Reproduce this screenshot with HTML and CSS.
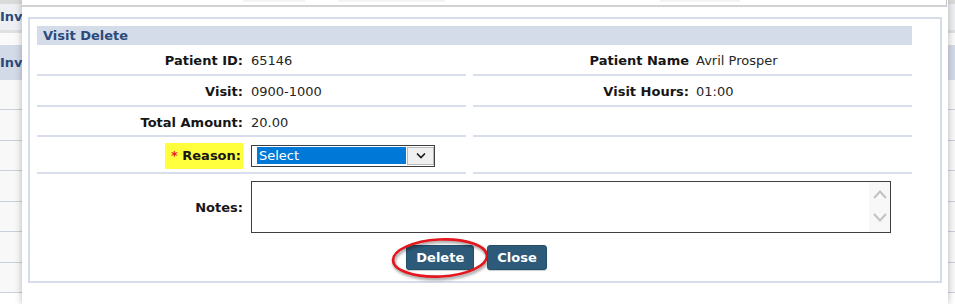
FILE: index.html
```html
<!DOCTYPE html>
<html>
<head>
<meta charset="utf-8">
<title>Visit Delete</title>
<link rel="stylesheet" href="styles.css">
</head>
<body>
<div class="page">
  <div class="bg">
    <div class="bg-top"></div>
    <div class="bg-title">Invoices</div>
    <div class="bg-sep"></div>
    <div class="bg-bar">Invoice List</div>
    <div class="bg-row first"></div>
    <div class="bg-row"></div>
    <div class="bg-row"></div>
    <div class="bg-row"></div>
    <div class="bg-row"></div>
    <div class="bg-row"></div>
    <div class="bg-row"></div>
  </div>

  <div class="dialog">
    <div class="dlg-top">
      <span class="ghost g1"></span>
      <span class="ghost g2"></span>
      <span class="ghost g3"></span>
    </div>
    <div class="panel">
      <div class="panel-head">Visit Delete</div>
      <div class="form-grid">
        <div class="cell lbl">Patient ID:</div>
        <div class="cell val">65146</div>
        <div class="cell lbl lbl-r">Patient Name</div>
        <div class="cell val">Avril Prosper</div>

        <div class="cell lbl">Visit:</div>
        <div class="cell val">0900-1000</div>
        <div class="cell lbl lbl-r">Visit Hours:</div>
        <div class="cell val">01:00</div>

        <div class="cell lbl">Total Amount:</div>
        <div class="cell val">20.00</div>
        <div class="cell lbl lbl-r"></div>
        <div class="cell val"></div>

        <div class="cell lbl"><span class="req"><span class="star">*</span> Reason:</span></div>
        <div class="cell val">
          <div class="select">
            <span class="select-text">Select</span>
            <span class="select-btn">
              <svg width="10" height="7" viewBox="0 0 10 7"><path d="M1 1.5 L5 5.5 L9 1.5" fill="none" stroke="#1a1a1a" stroke-width="1.6"/></svg>
            </span>
          </div>
        </div>
        <div class="cell lbl lbl-r"></div>
        <div class="cell val"></div>

        <div class="cell lbl notes-lbl">Notes:</div>
        <div class="notes-cell">
          <div class="textarea">
            <div class="ta-scroll">
              <svg width="16" height="11" viewBox="0 0 16 11"><path d="M2 9 L8 2.5 L14 9" fill="none" stroke="#c3c3c3" stroke-width="2"/></svg>
              <svg width="16" height="11" viewBox="0 0 16 11"><path d="M2 2 L8 8.5 L14 2" fill="none" stroke="#c3c3c3" stroke-width="2"/></svg>
            </div>
          </div>
        </div>
      </div>
      <div class="actions">
        <button class="btn btn-delete">Delete
          <svg class="ring" width="100" height="44" viewBox="0 0 100 44"><ellipse cx="50" cy="22" rx="47" ry="18.5" transform="rotate(-3 50 22)" fill="none" stroke="#e5161e" stroke-width="2.6"/></svg>
        </button>
        <button class="btn">Close</button>
      </div>
    </div>
  </div>
</div>
</body>
</html>
```
FILE: styles.css
```css
* { box-sizing: border-box; }
html, body { margin: 0; padding: 0; }
body {
  width: 955px;
  height: 304px;
  overflow: hidden;
  background: #ffffff;
  font-family: "DejaVu Sans", Verdana, sans-serif;
  font-size: 13px;
  color: #1d1d1d;
}
.page { position: relative; width: 955px; height: 304px; }

/* background page */
.bg { width: 955px; display: flex; flex-direction: column; background: #f6f6f6; }
.bg-top { height: 4px; background: #dadada; }
.bg-title {
  height: 26px; line-height: 26px; background: #eeeff2;
  font-weight: bold; color: #2b4a7b; white-space: nowrap;
}
.bg-sep { height: 15px; border-top: 3px solid #e0e0e0; background: #fafafa; }
.bg-bar {
  height: 35px; line-height: 35px; background: #d3dae7;
  font-weight: bold; color: #2b4a7b; white-space: nowrap;
}
.bg-row { height: 30.5px; border-bottom: 1px solid #c9cfdd; background: #f8f8f8; }
.bg-row.first { height: 30px; }

/* dialog */
.dialog {
  position: absolute;
  left: 22px; top: 0;
  width: 926px; height: 304px;
  background: #ffffff;
  box-shadow: 0 0 7px rgba(0,0,0,0.28);
}
.dlg-top {
  height: 7px;
  margin-right: 1px;
  border-bottom: 2px solid #d2d2d2;
  border-right: 1px solid #c4c4c4;
  display: flex;
  align-items: flex-start;
}
.ghost { height: 2px; background: #f3f3f3; }
.g1 { width: 62px; margin-left: 221px; }
.g2 { width: 107px; margin-left: 33px; }
.g3 { width: 80px; margin-left: 215px; }

.panel {
  margin: 10px 0 0 6px;
  width: 914px;
  border: 2px solid #d6dcea;
  padding: 7px 0 11px 7px;
}
.panel-head {
  width: 875px;
  height: 19px;
  line-height: 19px;
  background: #d5dce9;
  color: #2b4a7b;
  font-weight: bold;
  padding-left: 6px;
}
.form-grid {
  width: 875px;
  display: grid;
  grid-template-columns: 214px 215px 230px 216px;
  grid-template-rows: 31px 31px 30px 37px auto;
}
.cell {
  display: flex;
  align-items: center;
  padding-top: 2px;
  border-bottom: 2px solid #d8deeb;
  white-space: nowrap;
}
.lbl { justify-content: flex-end; padding-right: 8px; font-weight: bold; color: #161616; }
.lbl-r { margin-left: 7px; padding-right: 7px; }
.val { color: #262626; }

.req {
  background: #ffff3d;
  padding: 5px 2px 5px 6px;
  line-height: 16px;
}
.star { color: #ee1c24; }

.select {
  width: 184px; height: 22px;
  border: 1px solid #3d3d3d;
  display: flex; align-items: center;
  padding-left: 5px;
}
.select-text {
  width: 149px; height: 17px; line-height: 17px;
  background: #0078d7; color: #ffffff;
  padding-left: 2px;
}
.select-btn {
  width: 27px; height: 18px; margin-left: 1px;
  border: 1px solid #b8b8b8; background: #f0f0f0;
  display: flex; align-items: center; justify-content: center;
}

.notes-lbl { border-bottom: none; padding-top: 7px; }
.notes-cell { grid-column: 2 / 5; padding-top: 7px; }
.textarea {
  width: 640px; height: 52px;
  border: 1px solid #3f3f3f;
  display: flex; justify-content: flex-end;
  background: #fff;
}
.ta-scroll {
  width: 21px; background: #f8f8f8;
  display: flex; flex-direction: column; align-items: center;
  padding-top: 7px; gap: 12px;
}
.ta-scroll svg { display: block; }

.actions {
  width: 875px;
  margin-top: 12px;
  display: flex; justify-content: center; gap: 13px;
  padding-left: 4px;
}
.btn {
  position: relative;
  height: 25px;
  padding: 0 9px;
  border: 1px solid #244f6b;
  border-radius: 3px;
  background: #2c5a78;
  color: #ffffff;
  font-family: "DejaVu Sans", Verdana, sans-serif;
  font-size: 13px;
  font-weight: bold;
  box-shadow: 0 1px 1px rgba(0,0,0,0.2);
}
.ring {
  position: absolute;
  left: -17px; top: -10px;
  filter: drop-shadow(1px 2px 1.5px rgba(0,0,0,0.45));
  pointer-events: none;
}
```
